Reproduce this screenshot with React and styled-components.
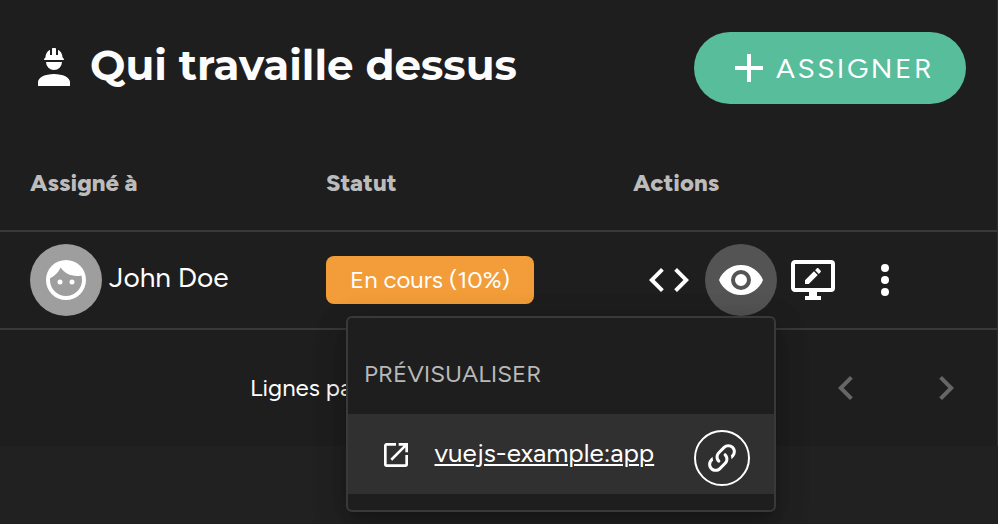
import React from 'react';
import styled, { createGlobalStyle } from 'styled-components';

const GlobalStyle = createGlobalStyle`
  * { box-sizing: border-box; }
  body { margin: 0; background: #212121; overflow: hidden; }
`;

const paths = {
  worker:
    'M12,15C7.58,15 4,16.79 4,19V21H20V19C20,16.79 16.42,15 12,15M8,9A4,4 0 0,0 12,13A4,4 0 0,0 16,9M11.5,2C11.2,2 11,2.21 11,2.5V5.5H10V3C10,3 7.75,3.86 7.75,6.75C7.75,6.75 7,6.89 7,8H17C16.95,6.89 16.25,6.75 16.25,6.75C16.25,3.86 14,3 14,3V5.5H13V2.5C13,2.21 12.81,2 12.5,2H11.5Z',
  plus: 'M19,13H13V19H11V13H5V11H11V5H13V11H19V13Z',
  face:
    'M9,11.75A1.25,1.25 0 0,0 7.75,13A1.25,1.25 0 0,0 9,14.25A1.25,1.25 0 0,0 10.25,13A1.25,1.25 0 0,0 9,11.75M15,11.75A1.25,1.25 0 0,0 13.75,13A1.25,1.25 0 0,0 15,14.25A1.25,1.25 0 0,0 16.25,13A1.25,1.25 0 0,0 15,11.75M12,2A10,10 0 0,0 2,12A10,10 0 0,0 12,22A10,10 0 0,0 22,12A10,10 0 0,0 12,2M12,20C7.59,20 4,16.41 4,12C4,11.71 4,11.42 4.05,11.14C6.41,10.09 8.28,8.16 9.26,5.77C11.07,8.33 14.05,10 17.42,10C18.2,10 18.95,9.91 19.67,9.74C19.88,10.45 20,11.21 20,12C20,16.41 16.41,20 12,20Z',
  code:
    'M14.6,16.6L19.2,12L14.6,7.4L16,6L22,12L16,18L14.6,16.6M9.4,16.6L4.8,12L9.4,7.4L8,6L2,12L8,18L9.4,16.6Z',
  eye:
    'M12,9A3,3 0 0,0 9,12A3,3 0 0,0 12,15A3,3 0 0,0 15,12A3,3 0 0,0 12,9M12,17A5,5 0 0,1 7,12A5,5 0 0,1 12,7A5,5 0 0,1 17,12A5,5 0 0,1 12,17M12,4.5C7,4.5 2.73,7.61 1,12C2.73,16.39 7,19.5 12,19.5C17,19.5 21.27,16.39 23,12C21.27,7.61 17,4.5 12,4.5Z',
  monitor:
    'M21,16V4H3V16H21M21,2A2,2 0 0,1 23,4V16A2,2 0 0,1 21,18H14V20H16V22H8V20H10V18H3C1.89,18 1,17.1 1,16V4C1,2.89 1.89,2 3,2H21M8,14V12.12L12.48,7.64L14.36,9.52L9.88,14H8M15.84,8.04L14.93,8.95L13.05,7.07L13.96,6.16C14.16,5.96 14.48,5.96 14.67,6.16L15.84,7.33C16.04,7.52 16.04,7.84 15.84,8.04Z',
  dots:
    'M12,16A2,2 0 0,1 14,18A2,2 0 0,1 12,20A2,2 0 0,1 10,18A2,2 0 0,1 12,16M12,10A2,2 0 0,1 14,12A2,2 0 0,1 12,14A2,2 0 0,1 10,12A2,2 0 0,1 12,10M12,4A2,2 0 0,1 14,6A2,2 0 0,1 12,8A2,2 0 0,1 10,6A2,2 0 0,1 12,4Z',
  previous: 'M15.41,16.58L10.83,12L15.41,7.41L14,6L8,12L14,18L15.41,16.58Z',
  next: 'M8.59,16.58L13.17,12L8.59,7.41L10,6L16,12L10,18L8.59,16.58Z',
  open:
    'M14,3V5H17.59L7.76,14.83L9.17,16.24L19,6.41V10H21V3M19,19H5V5H12V3H5C3.89,3 3,3.9 3,5V19A2,2 0 0,0 5,21H19A2,2 0 0,0 21,19V12H19V19Z',
  link:
    'M10.59,13.41C11,13.8 11,14.44 10.59,14.83C10.2,15.22 9.56,15.22 9.17,14.83C7.22,12.88 7.22,9.71 9.17,7.76V7.76L12.71,4.22C14.66,2.27 17.83,2.27 19.78,4.22C21.73,6.17 21.73,9.34 19.78,11.29L18.29,12.78C18.3,11.96 18.17,11.14 17.89,10.36L18.36,9.88C19.54,8.71 19.54,6.81 18.36,5.64C17.19,4.46 15.29,4.46 14.12,5.64L10.59,9.17C9.41,10.34 9.41,12.24 10.59,13.41M13.41,9.17C13.8,8.78 14.44,8.78 14.83,9.17C16.78,11.12 16.78,14.29 14.83,16.24V16.24L11.29,19.78C9.34,21.73 6.17,21.73 4.22,19.78C2.27,17.83 2.27,14.66 4.22,12.71L5.71,11.22C5.7,12.04 5.83,12.86 6.11,13.65L5.64,14.12C4.46,15.29 4.46,17.19 5.64,18.36C6.81,19.54 8.71,19.54 9.88,18.36L13.41,14.83C14.59,13.66 14.59,11.76 13.41,10.59C13,10.2 13,9.56 13.41,9.17Z',
};

const Svg = styled.svg`
  display: block;
  flex: none;
  width: ${(p) => p.$size}px;
  height: ${(p) => p.$size}px;
  fill: currentColor;
`;

const Icon = ({ name, size = 48 }) => (
  <Svg viewBox="0 0 24 24" $size={size} aria-hidden="true">
    <path d={paths[name]} />
  </Svg>
);

const Page = styled.div`
  position: relative;
  width: 998px;
  height: 524px;
  overflow: hidden;
  background: #212121;
  color: #fff;
  font-family: Figtree, Lato, sans-serif;
`;

const Card = styled.main`
  height: 446px;
  background: #1e1e1e;
  border-right: 1px solid #303030;
`;

const Header = styled.header`
  display: flex;
  align-items: center;
  height: 136px;
  padding: 0 31px 0 30px;
`;

const Title = styled.h1`
  display: flex;
  align-items: center;
  gap: 12px;
  flex: 1;
  margin: 0;
  color: #fff;
`;

const TitleText = styled.span`
  font: 700 42px/52px Montserrat, Inter, sans-serif;
  white-space: nowrap;
  margin-top: -6px;
  color: #fcfcfc;
`;

const AssignButton = styled.button`
  display: flex;
  align-items: center;
  width: 272px;
  height: 72px;
  padding: 0 0 0 31px;
  gap: 3px;
  border: 0;
  border-radius: 36px;
  background: #58bd9b;
  color: #fff;
  font: 400 28px/36px Figtree, Lato, sans-serif;
  letter-spacing: 2.5px;
  white-space: nowrap;
`;

const Row = styled.div`
  display: grid;
  grid-template-columns: 296px 307px 1fr;
  align-items: center;
  height: ${(p) => p.$height}px;
  padding-left: 30px;
  border-bottom: 2px solid #393939;
`;

const HeadCell = styled.div`
  font-size: 24px;
  line-height: 30px;
  font-weight: 800;
  color: #bcbcbc;
`;

const Person = styled.div`
  display: flex;
  align-items: center;
  gap: 7px;
  font-size: 28px;
  line-height: 36px;
`;

const Avatar = styled.div`
  display: grid;
  place-items: center;
  width: 72px;
  height: 72px;
  border-radius: 50%;
  background: #9e9e9e;
`;

const PersonName = styled.span`
  margin-top: -6px;
`;

const StatusChip = styled.div`
  display: grid;
  place-items: center;
  width: 208px;
  height: 48px;
  border-radius: 8px;
  background: #f29d39;
  font-size: 24px;
  line-height: 30px;
`;

const Actions = styled.div`
  display: flex;
`;

const IconButton = styled.button`
  display: grid;
  place-items: center;
  width: 72px;
  height: 72px;
  padding: 0;
  border: 0;
  border-radius: 50%;
  background: ${(p) => (p.$active ? '#545454' : 'transparent')};
  color: inherit;
`;

const Footer = styled.footer`
  display: flex;
  align-items: center;
  height: 116px;
  padding: 0 27px 0 250px;
  font-size: 24px;
  line-height: 30px;
`;

const RowsLabel = styled.span`
  flex: 1;
  white-space: nowrap;
`;

const Pager = styled.div`
  display: flex;
  gap: 52px;
  color: #666;
`;

const Menu = styled.section`
  position: absolute;
  left: 346px;
  top: 316px;
  width: 430px;
  height: 196px;
  border: 2px solid #393939;
  border-radius: 6px;
  background: #1e1e1e;
  box-shadow: 0 10px 12px -6px rgba(0, 0, 0, 0.2), 0 12px 34px 2px rgba(0, 0, 0, 0.15),
    0 6px 28px 4px rgba(0, 0, 0, 0.12);
`;

const MenuTitle = styled.div`
  display: flex;
  align-items: center;
  height: 96px;
  padding: 16px 16px 0;
  font-size: 24px;
  line-height: 30px;
  color: #b9b9b9;
`;

const MenuItem = styled.div`
  display: flex;
  align-items: center;
  height: 80px;
  padding: 2px 24px 0 32px;
  background: #303030;
`;

const PreviewLink = styled.a`
  flex: 1;
  margin: -4px 0 0 22.5px;
  font-size: 26px;
  line-height: 34px;
  white-space: nowrap;
  color: #fff;
  text-decoration: underline;
  text-decoration-thickness: 2px;
  text-underline-offset: 2px;
`;

const CopyButton = styled.button`
  display: grid;
  place-items: center;
  width: 56px;
  height: 56px;
  margin-top: 6px;
  padding: 0;
  border: 2px solid #fff;
  border-radius: 50%;
  background: transparent;
  color: #fff;
`;

export default function App() {
  return (
    <Page>
      <GlobalStyle />
      <Card>
        <Header>
          <Title>
            <Icon name="worker" />
            <TitleText>Qui travaille dessus</TitleText>
          </Title>
          <AssignButton>
            <Icon name="plus" />
            <span>ASSIGNER</span>
          </AssignButton>
        </Header>
        <Row $height={96}>
          <HeadCell>Assigné à</HeadCell>
          <HeadCell>Statut</HeadCell>
          <HeadCell>Actions</HeadCell>
        </Row>
        <Row $height={98}>
          <Person>
            <Avatar>
              <Icon name="face" />
            </Avatar>
            <PersonName>John Doe</PersonName>
          </Person>
          <StatusChip>En cours (10%)</StatusChip>
          <Actions>
            <IconButton aria-label="Code">
              <Icon name="code" />
            </IconButton>
            <IconButton $active aria-label="Prévisualiser">
              <Icon name="eye" />
            </IconButton>
            <IconButton aria-label="Modifier">
              <Icon name="monitor" />
            </IconButton>
            <IconButton aria-label="Plus">
              <Icon name="dots" />
            </IconButton>
          </Actions>
        </Row>
        <Footer>
          <RowsLabel>Lignes par page</RowsLabel>
          <Pager>
            <Icon name="previous" />
            <Icon name="next" />
          </Pager>
        </Footer>
      </Card>
      <Menu>
        <MenuTitle>PRÉVISUALISER</MenuTitle>
        <MenuItem>
          <Icon name="open" size={32} />
          <PreviewLink>vuejs-example:app</PreviewLink>
          <CopyButton aria-label="Copier le lien">
            <Icon name="link" size={36} />
          </CopyButton>
        </MenuItem>
      </Menu>
    </Page>
  );
}
